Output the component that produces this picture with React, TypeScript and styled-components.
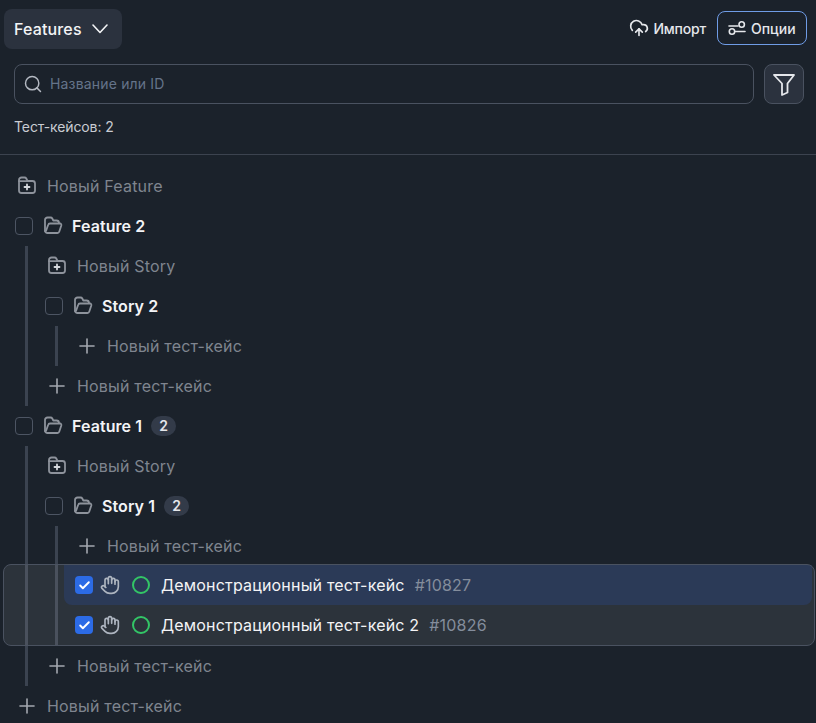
import React from "react";
import styled, { createGlobalStyle } from "styled-components";
import { Plus, Hand, Search, CloudUpload, Check } from "lucide-react";

const Global = createGlobalStyle`
  html, body { margin: 0; padding: 0; background: #1b222b; }
  body { font-family: Inter, "Liberation Sans", sans-serif; width: 816px; height: 723px; overflow: hidden; }
`;

const Page = styled.div`
  width: 816px;
  height: 723px;
  background: #1b222b;
  color: #fff;
  overflow: hidden;
`;

const Header = styled.header`
  height: 154px;
  border-bottom: 1px solid #3c434f;
  display: flex;
  flex-direction: column;
`;

const TopBar = styled.div`
  height: 64px;
  display: flex;
  align-items: flex-start;
  justify-content: space-between;
  padding: 9px 9px 0 4px;
  box-sizing: border-box;
`;

const ViewButton = styled.div`
  width: 118px;
  height: 40px;
  background: #2b323e;
  border-radius: 8px;
  display: flex;
  align-items: center;
  gap: 10px;
  padding-left: 10px;
  box-sizing: border-box;
  font-size: 16px;
  font-weight: 500;
  letter-spacing: 0.15px;
  color: #f3f4f6;
`;

const Actions = styled.div`
  display: flex;
  align-items: center;
  gap: 11px;
  padding-top: 2px;
`;

const ImportLink = styled.div`
  display: flex;
  align-items: center;
  gap: 4px;
  font-size: 14px;
  font-weight: 500;
  letter-spacing: -0.2px;
  color: #e5e7eb;
`;

const OptionsButton = styled.div`
  width: 90px;
  height: 34px;
  box-sizing: border-box;
  border: 1px solid #6f9ce6;
  border-radius: 8px;
  display: flex;
  align-items: center;
  gap: 3px;
  padding-left: 10px;
  font-size: 14px;
  font-weight: 500;
  color: #e5e7eb;
`;

const SearchRow = styled.div`
  display: flex;
  gap: 10px;
  padding: 0 12px 0 14px;
`;

const SearchBox = styled.div`
  flex: 1;
  height: 40px;
  box-sizing: border-box;
  border: 1px solid #4a5260;
  border-radius: 8px;
  display: flex;
  align-items: center;
  gap: 7px;
  padding: 0 0 1px 8px;
  font-size: 14px;
  letter-spacing: 0.17px;
  color: #65748a;
  svg { color: #b4b9c2; }
`;

const FilterButton = styled.div`
  width: 40px;
  height: 40px;
  box-sizing: border-box;
  background: #2b323e;
  border: 1px solid #4a5260;
  border-radius: 8px;
  display: flex;
  align-items: center;
  justify-content: center;
  color: #e5e7eb;
`;

const Count = styled.div`
  padding: 14px 0 0 14px;
  font-size: 14px;
  line-height: 18px;
  letter-spacing: -0.1px;
  color: #c9ccd2;
`;

const Tree = styled.div`
  padding-top: 11px;
  display: flex;
  flex-direction: column;
`;

const Row = styled.div`
  height: 40px;
  flex: none;
  display: flex;
  align-items: center;
  padding-left: 15px;
  box-sizing: border-box;
`;

const AddFolderIcon = styled.span`
  margin-left: 2px;
  margin-right: 10px;
  display: flex;
  color: #8e939c;
`;

const AddCaseIcon = styled.span`
  margin-right: 8px;
  display: flex;
  color: #a4a8b0;
`;

const AddLabel = styled.span`
  font-size: 16px;
  letter-spacing: 0.18px;
  color: #7f858f;
`;

const Box = styled.span`
  width: 18px;
  height: 18px;
  box-sizing: border-box;
  border: 1px solid #4d5563;
  border-radius: 4px;
  flex: none;
`;

const CheckedBox = styled.span`
  width: 18px;
  height: 18px;
  background: #1b5fe4;
  border-radius: 4px;
  flex: none;
  display: flex;
  align-items: center;
  justify-content: center;
  color: #fff;
`;

const FolderIcon = styled.span`
  margin-left: 10px;
  margin-right: 9px;
  display: flex;
  color: #8e939c;
`;

const FolderName = styled.span`
  font-size: 16px;
  font-weight: 600;
  letter-spacing: 0.08px;
  padding-bottom: 1px;
  color: #f3f4f6;
`;

const Badge = styled.span`
  margin-left: 9px;
  margin-bottom: 1px;
  min-width: 25px;
  height: 20px;
  border-radius: 10px;
  background: #333b49;
  color: #e5e7eb;
  font-size: 14px;
  font-weight: 600;
  display: flex;
  align-items: center;
  justify-content: center;
`;

const Group = styled.div`
  margin-left: 25px;
  border-left: 3px solid #3b4350;
  padding-left: 2px;
  display: flex;
  flex-direction: column;
`;

const CaseBlock = styled.div`
  position: relative;
  margin: -1px 0 1px;
  display: flex;
  flex-direction: column;
  &::after {
    content: "";
    position: absolute;
    top: -1px;
    bottom: -1px;
    left: -57px;
    width: 812px;
    box-sizing: border-box;
    border: 1px solid #4a5260;
    border-radius: 8px;
    background: rgba(255, 255, 255, 0.08);
    pointer-events: none;
  }
`;

const CaseRow = styled.div<{ $active?: boolean }>`
  height: 40px;
  width: 748px;
  margin-left: 4px;
  padding-left: 11px;
  box-sizing: border-box;
  display: flex;
  align-items: center;
  background: ${(p) => (p.$active ? "#1a2a49" : "transparent")};
  border-radius: 0 0 8px 8px;
`;

const HandIcon = styled.span`
  margin-left: 7px;
  display: flex;
  color: #a7afbb;
`;

const StatusIcon = styled.span`
  margin-left: 12px;
  margin-right: 11px;
  display: flex;
  color: #22c05a;
`;

const CaseName = styled.span`
  font-size: 16px;
  letter-spacing: 0.18px;
  color: #f3f4f6;
`;

const CaseId = styled.span`
  margin-left: 10px;
  font-size: 16px;
  letter-spacing: 0.2px;
  color: #7a8494;
`;

const FolderPlusGlyph = () => (
  <svg width="20" height="20" viewBox="0 0 20 20" fill="none" stroke="currentColor" strokeWidth="1.8" strokeLinecap="round" strokeLinejoin="round">
    <path d="M2 14.5V4A2.5 2.5 0 0 1 4.5 1.5H7.5C8.3 1.5 8.9 1.8 9.3 2.5L10.5 5H15.5A2.5 2.5 0 0 1 18 7.5V14.5A2.5 2.5 0 0 1 15.5 17H4.5A2.5 2.5 0 0 1 2 14.5Z" />
    <path d="M2 5.2H10.5" />
    <path d="M10 8.5V13.5M7.5 11H12.5" stroke="#d5d8dd" />
  </svg>
);

const FolderOpenGlyph = () => (
  <svg width="20" height="20" viewBox="0 0 20 20" fill="none" stroke="currentColor" strokeWidth="1.8" strokeLinecap="round" strokeLinejoin="round">
    <path d="M2 15V4A2.5 2.5 0 0 1 4.5 1.5H7.5C8.3 1.5 8.9 1.8 9.3 2.5L10.3 4.5H13.5A2.5 2.5 0 0 1 16 7" />
    <path d="M2 15C2.3 16.4 3 17 4 17H14.5C15.5 17 16 16.5 16.3 15.5L18.3 9.5C18.6 8.5 18 7.5 17 7.5H7C6 7.5 5.4 8 5.1 9L3 15" />
  </svg>
);

const ChevronGlyph = () => (
  <svg width="16" height="10" viewBox="0 0 16 10" fill="none" stroke="currentColor" strokeWidth="1.6" strokeLinecap="round" strokeLinejoin="round">
    <path d="M1 1L8 8.5L15 1" />
  </svg>
);

const FunnelGlyph = () => (
  <svg width="24" height="24" viewBox="8 8 24 24" fill="none" stroke="currentColor" strokeWidth="1.8" strokeLinejoin="round">
    <path d="M10 11H30L23.5 19.5V28.5L18 31V19.5Z" />
  </svg>
);

const StatusGlyph = () => (
  <svg width="18" height="18" viewBox="0 0 18 18" fill="none" stroke="currentColor" strokeWidth="2">
    <circle cx="9" cy="9" r="8" />
  </svg>
);

const OptionsGlyph = () => (
  <svg width="20" height="20" viewBox="0 0 20 20" fill="none" stroke="currentColor" strokeWidth="1.6" strokeLinecap="round">
    <path d="M1 8H10" />
    <circle cx="13.7" cy="6.5" r="2.7" />
    <path d="M7.5 13.5H17" />
    <circle cx="4" cy="13.5" r="2.7" />
  </svg>
);

const AddFolder = ({ label }: { label: string }) => (
  <Row>
    <AddFolderIcon>
      <FolderPlusGlyph />
    </AddFolderIcon>
    <AddLabel>{label}</AddLabel>
  </Row>
);

const AddCase = () => (
  <Row>
    <AddCaseIcon>
      <Plus size={24} strokeWidth={1.6} />
    </AddCaseIcon>
    <AddLabel>Новый тест-кейс</AddLabel>
  </Row>
);

const FolderRow = ({ name, count }: { name: string; count?: number }) => (
  <Row>
    <Box />
    <FolderIcon>
      <FolderOpenGlyph />
    </FolderIcon>
    <FolderName>{name}</FolderName>
    {count ? <Badge>{count}</Badge> : null}
  </Row>
);

const Case = ({ name, id, active }: { name: string; id: string; active?: boolean }) => (
  <CaseRow $active={active}>
    <CheckedBox>
      <Check size={13} strokeWidth={3.5} />
    </CheckedBox>
    <HandIcon>
      <Hand size={20} strokeWidth={2} />
    </HandIcon>
    <StatusIcon>
      <StatusGlyph />
    </StatusIcon>
    <CaseName>{name}</CaseName>
    <CaseId>{id}</CaseId>
  </CaseRow>
);

export default function App() {
  return (
    <Page>
      <Global />
      <Header>
        <TopBar>
          <ViewButton>
            Features
            <ChevronGlyph />
          </ViewButton>
          <Actions>
            <ImportLink>
              <CloudUpload size={20} strokeWidth={2} />
              Импорт
            </ImportLink>
            <OptionsButton>
              <OptionsGlyph />
              Опции
            </OptionsButton>
          </Actions>
        </TopBar>
        <SearchRow>
          <SearchBox>
            <Search size={20} strokeWidth={1.75} />
            Название или ID
          </SearchBox>
          <FilterButton>
            <FunnelGlyph />
          </FilterButton>
        </SearchRow>
        <Count>Тест-кейсов: 2</Count>
      </Header>
      <Tree>
        <AddFolder label="Новый Feature" />
        <FolderRow name="Feature 2" />
        <Group>
          <AddFolder label="Новый Story" />
          <FolderRow name="Story 2" />
          <Group>
            <AddCase />
          </Group>
          <AddCase />
        </Group>
        <FolderRow name="Feature 1" count={2} />
        <Group>
          <AddFolder label="Новый Story" />
          <FolderRow name="Story 1" count={2} />
          <Group>
            <AddCase />
            <CaseBlock>
              <Case name="Демонстрационный тест-кейс" id="#10827" active />
              <Case name="Демонстрационный тест-кейс 2" id="#10826" />
            </CaseBlock>
          </Group>
          <AddCase />
        </Group>
        <AddCase />
      </Tree>
    </Page>
  );
}
